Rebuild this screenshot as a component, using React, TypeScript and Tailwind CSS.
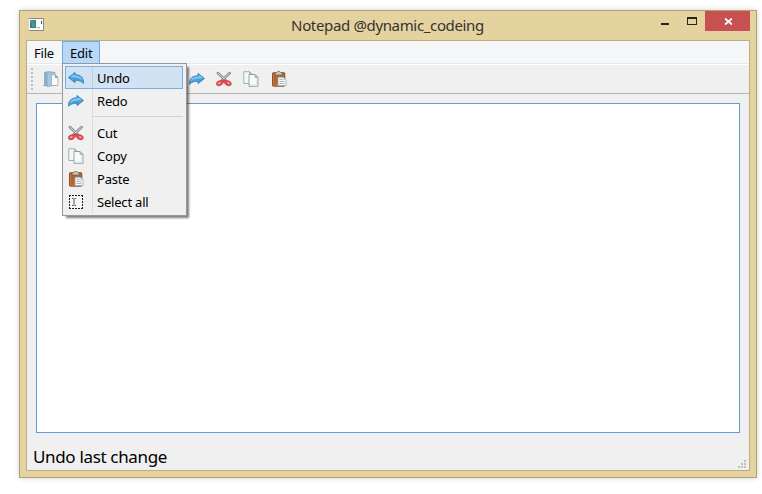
import React from "react";

type IconProps = { className?: string };

function OpenIcon({ className = "" }: IconProps) {
  return (
    <svg className={`size-4 shrink-0 ${className}`} viewBox="0 0 16 16">
      <path d="M0 14.6h3" stroke="#9fb4bb" />
      <path d="M1.6 1.4l4-.7 6.3.7v12.8l-7 1.2-3.3-1.2z" fill="#9cc3dc" stroke="#6d93ac" strokeWidth=".7" />
      <path d="M2 1.8l2.600.8v12.200L2 14z" fill="#86b0ca" />
      <path d="M5.2 2.800l6.400-.8v11.800l-6.400 1.200z" fill="#a3cae0" />
      <path d="M8.4 3.9h4l2.5 2.6v8H8.4z" fill="#fbfdfd" stroke="#93a9ae" strokeWidth=".8" />
      <path d="M12.2 3.9v2.8h2.7z" fill="#5e7f83" />
    </svg>
  );
}

function RedoIcon({ className = "" }: IconProps) {
  return (
    <svg className={`size-4 shrink-0 ${className}`} viewBox="0 0 16 16">
      <path d="M.6 13.300C0 8.400 2.800 4.700 9 4.700V2.400l6.500 5.100L9 12.700V10.400C5 10.200 3 11 .6 13.300z" fill="#479fdd" stroke="#3579ae" strokeWidth=".8" strokeLinejoin="round" />
      <path d="M1.500 10.400c.8-3.300 3.800-4.900 8.400-4.900V4.100l4 3.200c-5.600-.3-9.400.3-12.400 3.100z" fill="#83c8f4" />
    </svg>
  );
}

function UndoIcon() {
  return <RedoIcon className="-scale-x-100" />;
}

function CutIcon({ className = "" }: IconProps) {
  return (
    <svg className={`size-4 shrink-0 ${className}`} viewBox="0 0 16 16">
      <path d="M1.800 2l8 7.500M13.700 2l-8 7.500" stroke="#858a8c" strokeWidth="2.500" strokeLinecap="round" />
      <path d="M2 2.100l8 7.500M13.500 2.100l-8 7.500" stroke="#e4e6e6" strokeWidth=".9" />
      <path d="M7.300 8.700L8.700 8.700 10.500 9.600C14 9.700 15.700 11.400 15.200 13.400c-.6 1.900-3.800 1.900-5.600.2L7.800 11.300l-1.900 2.300C4.100 15.300.900 15.200.400 13.400-.1 11.400 1.700 9.700 5.100 9.600z" fill="#db4b51" stroke="#c4373e" strokeWidth=".6" />
      <path d="M1.800 12.800c.2-1.200 1.500-1.700 3.200-1.500-.7 1.600-2.100 2.200-3.200 1.500zM13.800 12.800c-.2-1.200-1.500-1.700-3.200-1.500.7 1.600 2.100 2.200 3.200 1.500z" fill="#f3b8b7" />
    </svg>
  );
}

function CopyIcon({ className = "" }: IconProps) {
  return (
    <svg className={`size-4 shrink-0 ${className}`} viewBox="0 0 16 16">
      <path d="M.8.7h5.700l2.600 2.600v9.200H.8z" fill="#f2f7f7" stroke="#94aaaa" strokeWidth=".9" />
      <path d="M6.500.7v2.600h2.600z" fill="#bed1d1" stroke="#94aaaa" strokeWidth=".6" />
      <path d="M6 3.500h6l3 3v8.800H6z" fill="#f8fbfb" stroke="#849c9c" strokeWidth=".9" />
      <path d="M12 3.500v3h3z" fill="#c3d6d6" stroke="#849c9c" strokeWidth=".6" />
      <path d="M7.600 13.700h5.800V8" fill="none" stroke="#dce9e9" />
    </svg>
  );
}

function PasteIcon({ className = "" }: IconProps) {
  return (
    <svg className={`size-4 shrink-0 ${className}`} viewBox="0 0 16 16">
      <rect x="1.500" y="1.700" width="12.300" height="13.500" rx=".8" fill="#b0622f" stroke="#8c431f" strokeWidth=".9" />
      <path d="M2.600 3v11.200h5" fill="none" stroke="#c77b4b" />
      <path d="M4.200 4V1.500h1.500l.8-1h2.400l.8 1h1.500V4z" fill="#cbc4b8" stroke="#736456" strokeWidth=".7" />
      <path d="M7 6.300h5.400l2.700 2.700v5.500H7z" fill="#f2f8fa" stroke="#9daeb3" strokeWidth=".8" />
      <path d="M8.500 8.500h3M8.500 10.500h5M8.500 12.500h5" stroke="#8facba" strokeWidth=".8" />
      <path d="M12.400 6.300V9h2.700z" fill="#b7cbd1" />
    </svg>
  );
}

function SelectIcon() {
  return (
    <svg className="size-4 shrink-0" viewBox="0 0 16 16">
      <path d="M1 1h14v14H1z" fill="#f5f5f5" />
      <path d="M1 1.500h14M1 14.500h14M1.500 1v14M14.500 1v14" stroke="#1c1c1c" strokeDasharray="2 1" fill="none" />
      <path d="M4 4.500h1.500M6.500 4.500H8M6 5v6M4 11.500h1.500M6.500 11.500H8" stroke="#555" fill="none" />
    </svg>
  );
}

type ItemProps = { icon: React.ReactNode; label: string; active?: boolean };

function MenuItem({ icon, label, active = false }: ItemProps) {
  return (
    <div className={`flex h-[23px] items-center border pl-[2px] ${active ? "border-[#78aee5] bg-[#d1e2f2]" : "border-transparent"}`}>
      {icon}
      <span className={`ml-[8px] h-[21px] w-px ${active ? "bg-[#bdcfdf]" : "bg-transparent"}`} />
      <span className="ml-[4px] whitespace-nowrap pt-[2px] leading-[21px] tracking-[-0.2px]">{label}</span>
    </div>
  );
}

function EditMenu() {
  return (
    <div className="absolute left-[-1px] top-[21px] z-10 h-[153px] w-[125px] border border-[#979797] bg-[#f0f0f0] shadow-[3px_3px_2px_-1px_rgba(0,0,0,0.5)]">
      <div className="absolute bottom-[2px] left-[29px] top-[2px] w-px bg-[#dcdcdc]" />
      <div className="relative ml-[2px] mr-[3px] mt-[2px]">
        <MenuItem active icon={<UndoIcon />} label="Undo" />
        <MenuItem icon={<RedoIcon />} label="Redo" />
        <div className="my-[4px] ml-[28px] h-px bg-[#d5d5d5]" />
        <MenuItem icon={<CutIcon />} label="Cut" />
        <MenuItem icon={<CopyIcon />} label="Copy" />
        <MenuItem icon={<PasteIcon />} label="Paste" />
        <MenuItem icon={<SelectIcon />} label="Select all" />
      </div>
    </div>
  );
}

function TitleBar() {
  return (
    <header className="flex h-[29px] shrink-0 items-start">
      <svg className="ml-[9px] mt-[7px] h-[13px] w-[16px]" viewBox="0 0 16 13">
        <path d="M0 0h15v13H0z" fill="#fbfbfb" />
        <path d="M0 .5h15M14.500 0v13M0 12.500h15" stroke="#8a8b86" fill="none" />
        <path d="M1 2h6v8H1z" fill="#397f84" />
        <path d="M1 2h4v3H1z" fill="#5788aa" />
        <path d="M3 5h3v4H3z" fill="#4b9b79" />
        <path d="M8 9.500h3" stroke="#a5adb0" />
        <path d="M12.500 3v3" stroke="#3f4a4e" />
      </svg>
      <div className="flex-1 pl-[70px] pt-[2px] text-center text-[15px] leading-[24px] text-[#333] tracking-[-0.35px]">Notepad @dynamic_codeing</div>
      <svg className="h-[20px] w-[45px] shrink-0" viewBox="0 0 45 20">
        <path d="M1 12h8v2H1z" fill="#252525" />
        <path d="M27 6v8h10V6zM28 8h8v5h-8z" fill="#252525" fillRule="evenodd" />
      </svg>
      <div className="mr-[6px] flex h-[20px] w-[45px] shrink-0 items-center justify-center bg-[#c75050]">
        <svg className="mt-px h-[7px] w-[8px] translate-x-[0.5px]" viewBox="0 0 8 7"><path d="M.5 .5l7 6M7.500 .5l-7 6" stroke="white" strokeWidth="1.800" /></svg>
      </div>
    </header>
  );
}

export default function App() {
  return (
    <div className="h-[494px] w-[762px] overflow-hidden bg-white pl-[19px] pt-[10px] font-['Noto_Sans','Open_Sans',sans-serif] text-[13px] text-black">
      <main className="flex h-[468px] w-[738px] flex-col border border-[#afa078] bg-[#e4d29f] shadow-[0_0_5px_rgba(0,0,0,0.2)]">
        <TitleBar />
        <section className="ml-[6px] flex h-[431px] w-[724px] flex-col border border-[#bdae82] bg-[#f0f0f0]">
          <nav className="flex h-[23px] shrink-0 border-b border-[#e8e8e8] bg-[#f5f6f7]">
            <div className="w-[35px] pl-[7px] leading-[25px] tracking-[-0.2px]">File</div>
            <div className="relative h-[23px] w-[38px] border border-[#6ea8e6] bg-[#b8d8f9]">
              <div className="pl-[7px] leading-[23px] tracking-[-0.2px]">Edit</div>
              <div className="absolute left-0 top-0"><EditMenu /></div>
            </div>
          </nav>
          <div className="flex h-[30px] shrink-0 items-center border-b border-t border-b-[#b6b6b6] border-t-white pl-[4px]">
            <div className="flex h-[22px] w-[2px] flex-col justify-between">
              {[0, 1, 2, 3, 4, 5].map((dot) => <i key={dot} className="size-[2px] bg-[#bdbdbd]" />)}
            </div>
            <OpenIcon className="ml-[10px]" />
            <div className="ml-[130px] flex">
              <RedoIcon />
              <CutIcon className="ml-[11px]" />
              <CopyIcon className="ml-[11px]" />
              <PasteIcon className="ml-[12px]" />
            </div>
          </div>
          <div className="ml-[9px] mt-[9px] h-[330px] w-[704px] shrink-0 border border-[#5c9de0] bg-white" />
          <footer className="flex flex-1 items-end justify-between pb-px pl-[6px] pr-[3px]">
            <span className="text-[17px] leading-[25px] tracking-[-0.34px]">Undo last change</span>
            <svg className="mb-[1px] h-[8px] w-[8px]" viewBox="0 0 8 8"><path d="M6 0h2v2H6zM3 3h2v2H3zM6 3h2v2H6zM0 6h2v2H0zM3 6h2v2H3zM6 6h2v2H6z" fill="#bfbfbf" /></svg>
          </footer>
        </section>
      </main>
    </div>
  );
}
